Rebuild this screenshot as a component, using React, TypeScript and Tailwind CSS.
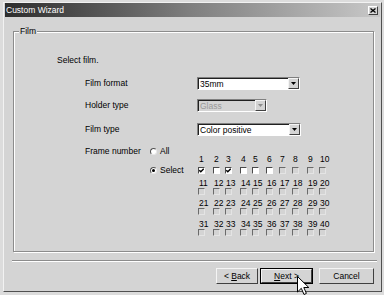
import React from "react";

const colWidths = "grid-cols-[15px_12px_15px_12px_14px_13px_13px_15px_12px_12px]";

const Arrow: React.FC<{ disabled?: boolean }> = ({ disabled }) => (
  <div className="w-[11px] h-full bg-[#d4d4d4] border-t border-l border-[#f4f4f4] border-r border-b border-r-[#404040] border-b-[#404040] flex items-center justify-center">
    <svg width="5" height="3" viewBox="0 0 5 3">
      <path d="M0 0 H5 L2.5 3 Z" fill={disabled ? "#8c8c8c" : "#000"} />
    </svg>
  </div>
);

const Combo: React.FC<{ value: string; width: string; disabled?: boolean }> = ({ value, width, disabled }) => (
  <div
    className={`${width} h-[13px] flex border-t border-l border-[#808080] border-r border-b border-r-white border-b-white`}
  >
    <div
      className={`flex-1 flex items-center pl-[1px] border-t border-l border-[#202020] ${
        disabled ? "bg-[#d4d4d4] text-[#9a9a9a]" : "bg-white text-black"
      }`}
    >
      <span className="leading-[10px]">{value}</span>
    </div>
    <Arrow disabled={disabled} />
  </div>
);

const Radio: React.FC<{ checked?: boolean; label: string }> = ({ checked, label }) => (
  <div className="flex items-center h-[10px]">
    <div className="w-[7px] h-[7px] rounded-full bg-white border border-t-[#505050] border-l-[#505050] border-r-[#e8e8e8] border-b-[#e8e8e8] flex items-center justify-center">
      {checked && <div className="w-[3px] h-[3px] rounded-full bg-black" />}
    </div>
    <span className="ml-[3px] leading-[10px]">{label}</span>
  </div>
);

const Box: React.FC<{ enabled: boolean; checked: boolean }> = ({ enabled, checked }) => (
  <div
    className={`w-[7px] h-[7px] border-t border-l border-r border-b flex items-center justify-center ${
      enabled
        ? "bg-white border-[#4a4a4a] border-r-white border-b-white"
        : "bg-[#d4d4d4] border-[#6a6a6a] border-r-[#e4e4e4] border-b-[#e4e4e4]"
    }`}
  >
    {checked && (
      <svg width="5" height="5" viewBox="0 0 5 5">
        <path d="M0.3 2.3 L1.8 3.8 L4.7 0.8" stroke="#000" strokeWidth="1.3" fill="none" />
      </svg>
    )}
  </div>
);

const FrameGrid: React.FC = () => {
  const rows = [0, 1, 2, 3];
  return (
    <div className="flex flex-col ml-[1px] mt-[9px]">
      {rows.map((r) => (
        <div key={r} className={`grid ${colWidths} ${r > 0 ? "mt-[4.5px]" : ""}`}>
          {Array.from({ length: 10 }, (_, i) => {
            const n = r * 10 + i + 1;
            return (
              <div key={n} className="flex flex-col">
                <span className={`${r === 0 ? "h-[12px]" : "h-[9px]"} leading-[9px] pl-[1px] whitespace-nowrap`}>
                  {n}
                </span>
                <Box enabled={n <= 6} checked={n === 1 || n === 3} />
              </div>
            );
          })}
        </div>
      ))}
    </div>
  );
};

const Button: React.FC<{ width: string; isDefault?: boolean; children: React.ReactNode }> = ({
  width,
  isDefault,
  children,
}) => (
  <div className={`${width} h-[16px] ${isDefault ? "border border-black" : ""}`}>
    <div className="w-full h-full bg-[#d4d4d4] border-t border-l border-[#f4f4f4] border-r border-b border-r-[#404040] border-b-[#404040] flex items-center justify-center">
      <span className="leading-[10px]">{children}</span>
    </div>
  </div>
);

export default function App() {
  return (
    <div className="relative w-[384px] h-[295px] overflow-hidden bg-[#dcdcdc] font-['Liberation_Sans',Arial,sans-serif] text-[8.5px] text-black pt-[2px] pl-[3px]">
      <div className="w-[379px] h-[290px] bg-[#d4d4d4] border-t border-l border-[#f2f2f2] border-r border-b border-r-[#505050] border-b-[#505050] flex flex-col">
        {/* title bar */}
        <div className="mx-[1px] h-[14px] bg-gradient-to-r from-[#2e2e2e] via-[#808080] to-[#c8c8c8] flex items-center justify-between">
          <span className="pl-[1px] text-white leading-[14px]">Custom Wizard</span>
          <div className="mr-[2px] w-[10px] h-[9px] bg-[#d4d4d4] border-t border-l border-white border-r border-b border-r-[#404040] border-b-[#404040] flex items-center justify-center">
            <svg width="6" height="5" viewBox="0 0 6 5">
              <path d="M0.5 0.5 L5.5 4.5 M5.5 0.5 L0.5 4.5" stroke="#000" strokeWidth="1.3" />
            </svg>
          </div>
        </div>

        {/* Film group */}
        <div className="relative ml-[9px] mt-[14px] w-[361px] h-[221px] border border-[#8c8c8c] shadow-[inset_1px_1px_0_#ffffff,1px_1px_0_#ffffff]">
          <span className="absolute left-[5px] -top-[6px] px-[1px] bg-[#d4d4d4] leading-[10px]">Film</span>

          <div className="pl-[43px] mt-[23px] leading-[10px]">Select film.</div>

          <div className="pl-[71px] mt-[12px] flex flex-col">
            <div className="flex items-center h-[13px]">
              <span className="w-[112px]">Film format</span>
              <Combo value="35mm" width="w-[103px]" />
            </div>
            <div className="flex items-center h-[13px] mt-[9px]">
              <span className="w-[112px]">Holder type</span>
              <Combo value="Glass" width="w-[70px]" disabled />
            </div>
            <div className="flex items-center h-[13px] mt-[11px]">
              <span className="w-[112px]">Film type</span>
              <Combo value="Color positive" width="w-[104px]" />
            </div>
            <div className="flex mt-[10px]">
              <span className="w-[65px] h-[10px] leading-[10px]">Frame number</span>
              <div className="w-[47px] flex flex-col">
                <Radio label="All" />
                <div className="mt-[9px]">
                  <Radio label="Select" checked />
                </div>
              </div>
              <FrameGrid />
            </div>
          </div>
        </div>

        {/* separator */}
        <div className="ml-[8px] mt-[8px] w-[365px] h-[2px] border-t border-[#8c8c8c] border-b border-b-white" />

        {/* buttons */}
        <div className="mt-[6px] pr-[7px] flex justify-end">
          <Button width="w-[42px]">
            &lt; <span className="underline">B</span>ack
          </Button>
          <div className="ml-[2px]">
            <Button width="w-[53px]" isDefault>
              <span className="underline">N</span>ext &gt;
            </Button>
          </div>
          <div className="ml-[6px]">
            <Button width="w-[55px]">Cancel</Button>
          </div>
        </div>
      </div>

      {/* mouse pointer */}
      <svg className="absolute left-[297px] top-[276px]" width="13" height="20" viewBox="0 0 13 20">
        <path d="M0.5 0.5 L0.5 16 L4.3 12.3 L7 18.5 L9.4 17.4 L6.8 11.5 L11.8 11.5 Z" fill="#fff" stroke="#000" strokeWidth="1" />
      </svg>
    </div>
  );
}
